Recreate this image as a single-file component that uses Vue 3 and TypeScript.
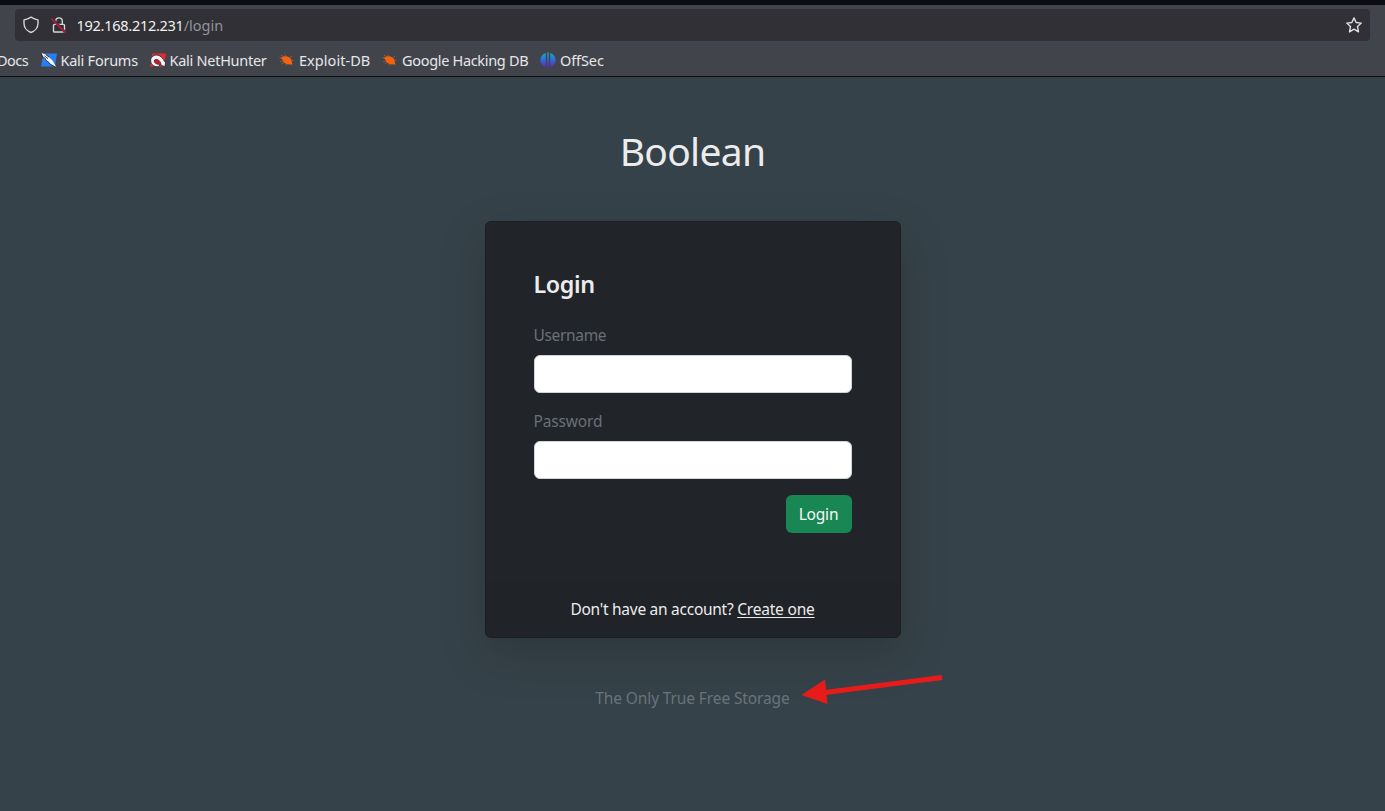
<script setup lang="ts">
interface Bookmark {
  label: string
  icon: 'none' | 'forums' | 'nethunter' | 'bug' | 'offsec'
  key: string
}

const bookmarks: Bookmark[] = [
  { label: 'Docs', icon: 'none', key: 'docs' },
  { label: 'Kali Forums', icon: 'forums', key: 'forums' },
  { label: 'Kali NetHunter', icon: 'nethunter', key: 'nethunter' },
  { label: 'Exploit-DB', icon: 'bug', key: 'exploit' },
  { label: 'Google Hacking DB', icon: 'bug', key: 'ghdb' },
  { label: 'OffSec', icon: 'offsec', key: 'offsec' },
]
</script>

<template>
  <div class="window">
    <header class="chrome">
      <div class="urlbar">
        <svg class="shield" width="16" height="18" viewBox="0 0 16 18" fill="none" stroke="#d6d6d6" stroke-width="1.4" stroke-linejoin="round">
          <path d="M8 1.2C10 2.500 12.500 3.500 15 3.900V7.400C15 11.800 11.500 15.200 8 16.500 4.500 15.200 1 11.800 1 7.400V3.900C3.500 3.500 6 2.500 8 1.200Z" />
        </svg>
        <svg class="lock" width="16" height="18" viewBox="0 0 16 18" fill="none">
          <path d="M4.700 8.400V5.200a3.300 3.300 0 0 1 6.600 0V8.400M3.500 8.400h9a1 1 0 0 1 1 1V15a1 1 0 0 1-1 1h-9a1 1 0 0 1-1-1V9.400a1 1 0 0 1 1-1Z" stroke="#d6d6d6" stroke-width="1.400" />
          <path d="M1 2.600 14.300 16.300" stroke="#303036" stroke-width="2.600" />
          <path d="M.8 3 14 16.200" stroke="#d5133f" stroke-width="1.300" stroke-linecap="round" />
        </svg>
        <span class="url">192.168.212.231<span class="path">/login</span></span>
        <svg class="star" width="18" height="18" viewBox="0 0 18 18" fill="none" stroke="#dededf" stroke-width="1.400" stroke-linejoin="round">
          <path d="M9 1.900 11.150 6.500 16.300 7.100 12.500 10.500 13.500 15.900 9 13.200 4.500 15.900 5.500 10.500 1.700 7.100 6.850 6.500Z" />
        </svg>
      </div>
      <nav class="bookmarks">
        <span v-for="b in bookmarks" :key="b.key" class="bookmark" :class="b.key">
          <svg v-if="b.icon === 'forums'" width="16" height="16" viewBox="0 0 16 16">
            <path d="M2.500 1.500H16L13.800 14.500H0Z" fill="#267df4" />
            <path d="M0 .8 4.500 2.400 8 5 11.700 8.700 15.600 15.400 9.800 12.300 7 9.500 3 7.200Z" fill="#f4f4f4" />
            <path d="M0 .8 2 5.800 6 8.700 9.500 12.400 15.500 15.600M3.500 3.900 7 6.700M2.500 5 5 7.200M5 2.800 8.500 5.400" fill="none" stroke="#17191e" stroke-width=".8" />
          </svg>
          <svg v-else-if="b.icon === 'nethunter'" width="16" height="16" viewBox="0 0 16 16">
            <path d="M2.500 1.500H16L13.800 14.500H0Z" fill="#ed2732" />
            <path d="M.8 9.800C-.5 5 5 1.500 9.500 3.800 13 5.500 14 9 15.600 10.800L14.800 14.800 10.800 13C11.300 9.200 7 6 4.600 8 3.400 10.500 6 12.500 10 12.300L8.500 14.700C4 15.100 1.300 12.800.8 9.800Z" fill="#f4f4f4" stroke="#202126" stroke-width=".8" />
            <path d="M4.500 7.900C7 6.400 9.500 8.500 10.200 11.600 7 12.500 4.500 11.300 4.500 7.900Z" fill="#b81e31" />
          </svg>
          <svg v-else-if="b.icon === 'bug'" width="16" height="16" viewBox="0 0 16 16">
            <g fill="none" stroke="#a85a35" stroke-width=".8">
              <path d="M.5 5.500 4 6.300M2 3.200 5 5M6 2.500 7 5M1 9.800 4.500 8.500M2.800 12 6 9.500M7 13.500 8 11M11 5.500 13 4.300M12 7.800 14.500 8.500M11 11 13.500 13.500" />
            </g>
            <path d="M1.300 5.800C2.600 6.200 3.300 4.500 5 4.500 8.500 3.900 11.500 5.500 12.500 8.300L13.300 12.200 10 12.400C7 12.300 4 10.500 3.600 7.700Z" fill="#f3620d" />
          </svg>
          <svg v-else-if="b.icon === 'offsec'" width="16" height="16" viewBox="0 0 16 16">
            <defs>
              <linearGradient id="offsec-fill" x1="0" y1="0" x2="0" y2="1">
                <stop offset="0" stop-color="#12b3cf" />
                <stop offset=".5" stop-color="#2e6bd8" />
                <stop offset="1" stop-color="#6a20cf" />
              </linearGradient>
            </defs>
            <path d="M5.700 1V15C2.700 13.800.4 11.500.4 8S2.700 2.200 5.700 1ZM7.300.5H8.700V15.500H7.300ZM10.300 1C13.300 2.200 15.600 4.500 15.600 8S13.300 13.800 10.300 15Z" fill="url(#offsec-fill)" />
          </svg>
          <span class="bookmark-label">{{ b.label }}</span>
        </span>
      </nav>
    </header>

    <main class="page">
      <h1 class="brand"><span>Boolean</span></h1>
      <section class="card">
        <form class="card-body" @submit.prevent>
          <h2 class="title"><span>Login</span></h2>
          <label class="label user" for="username"><span>Username</span></label>
          <input id="username" class="field" type="text" />
          <label class="label pass" for="password"><span>Password</span></label>
          <input id="password" class="field" type="password" />
          <button class="submit" type="submit">Login</button>
        </form>
        <footer class="card-footer">
          <span class="question">Don't have an account? </span><a class="create">Create one</a>
        </footer>
      </section>
      <p class="tagline">
        <span>The Only True Free Storage</span>
        <svg class="arrow" width="144" height="34" viewBox="0 0 144 34">
          <path d="M24 18.500 141 3.500" stroke="#e81b1b" stroke-width="5" />
          <path d="M.5 21 24 5.500 26.500 30Z" fill="#e81b1b" />
        </svg>
      </p>
    </main>
  </div>
</template>

<style>
html,
body {
  margin: 0;
  background: #364249;
}
</style>

<style scoped>
* {
  box-sizing: border-box;
}
.window {
  height: 811px;
  overflow: hidden;
  background: #364249;
  font-family: "Noto Sans", "Open Sans", sans-serif;
  font-size: 15.5px;
  color: #ececec;
}
.chrome {
  height: 77px;
  padding: 4px 15px 0;
  background: #42444c;
  border-top: 5px solid #0c0d12;
  border-bottom: 1px solid #0c0c0d;
}
.urlbar {
  height: 32px;
  display: flex;
  align-items: center;
  padding: 0 7px 0 8px;
  background: #303036;
  border-radius: 4px;
}
.lock {
  margin-left: 12px;
}
.url {
  flex: 1;
  margin-left: 9.5px;
  font-size: 14.5px;
  letter-spacing: -0.27px;
  color: #f0f0f1;
}
.path {
  color: #93939a;
  letter-spacing: 0;
}
.bookmarks {
  height: 35px;
  margin-left: -18px;
  margin-top: 1px;
  display: flex;
  align-items: center;
  font-size: 14.5px;
  color: #e6e6e9;
}
.bookmark {
  flex: none;
  display: flex;
  align-items: center;
  gap: 4px;
  line-height: 20px;
  white-space: nowrap;
}
.bookmark svg {
  flex: none;
}
.docs { width: 43.5px; letter-spacing: -0.5px; }
.forums { width: 109px; letter-spacing: -0.25px; }
.nethunter { width: 129.5px; letter-spacing: -0.27px; }
.exploit { width: 103px; letter-spacing: 0.05px; }
.ghdb { width: 158px; letter-spacing: -0.32px; }
.offsec { letter-spacing: -0.1px; }
.page {
  display: flex;
  flex-direction: column;
  align-items: center;
}
.brand {
  margin: 48px 0 0;
  height: 48px;
  line-height: 52px;
  font-size: 39px;
  font-weight: 400;
  letter-spacing: -0.7px;
}
.card {
  width: 416px;
  height: 417px;
  margin-top: 48px;
  display: flex;
  flex-direction: column;
  background: #212429;
  border: 1px solid #1b1e22;
  border-radius: 6px;
  box-shadow: 0 16px 48px rgba(0, 0, 0, 0.175);
}
.card-body {
  flex: 1;
  display: flex;
  flex-direction: column;
  padding: 48px 48px 0;
}
.title {
  margin: 0 0 24px;
  height: 29px;
  line-height: 28px;
  font-size: 23.3px;
  font-weight: 600;
  letter-spacing: -0.4px;
}
.label {
  height: 24px;
  margin-bottom: 8px;
  line-height: 25px;
  color: #6a7077;
}
.user { letter-spacing: -0.33px; }
.pass { letter-spacing: -0.15px; }
.field {
  width: 318px;
  height: 38px;
  margin: 0 0 16px;
  padding: 6px 12px;
  background: #fff;
  border: 1px solid #ced4da;
  border-radius: 6px;
  outline: none;
}
.submit {
  align-self: flex-end;
  width: 66px;
  height: 38px;
  padding: 0;
  background: #198754;
  border: 0;
  border-radius: 6px;
  color: #f8faf9;
  font: inherit;
  letter-spacing: -0.2px;
  text-align: center;
}
.card-footer {
  height: 56px;
  padding-top: 16px;
  line-height: 25px;
  text-align: center;
  white-space: pre;
  background: #202327;
  border-radius: 0 0 5px 5px;
}
.question {
  letter-spacing: -0.27px;
}
.create {
  letter-spacing: -0.2px;
  text-decoration: underline;
  text-decoration-thickness: 1px;
  text-underline-offset: 2px;
  text-decoration-skip-ink: none;
}
.tagline {
  position: relative;
  margin: 48px 0 0;
  line-height: 25px;
  color: #69737a;
  letter-spacing: -0.12px;
}
.arrow {
  position: absolute;
  left: 206px;
  top: -12px;
}
</style>
